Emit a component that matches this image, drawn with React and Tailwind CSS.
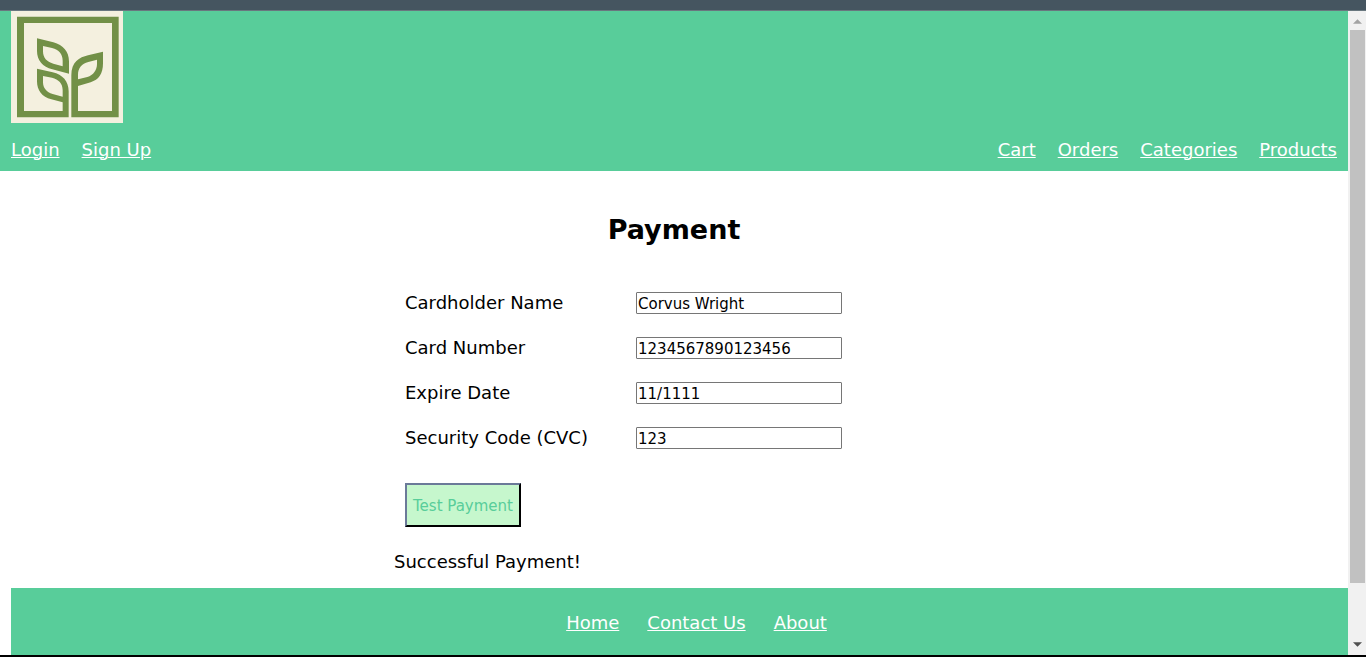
const navLink = "underline underline-offset-1 decoration-1";

const fields = [
  { id: "name", label: "Cardholder Name", value: "Corvus Wright" },
  { id: "number", label: "Card Number", value: "1234567890123456" },
  { id: "expire", label: "Expire Date", value: "11/1111" },
  { id: "cvc", label: "Security Code (CVC)", value: "123" },
];

function Logo() {
  return (
    <svg viewBox="33 33 336 336" className="block size-28" role="img" aria-label="Plant shop">
      <rect x="33" y="33" width="336" height="336" fill="#f4f0df" />
      <path
        fill="#729047"
        fillRule="evenodd"
        d="M51 50H356V352H214V226C214 186 238 172 264 166L309 155V190C309 222 296 239 272 247L234 258V333H336V69H72V333H188V307L154 298C126 291 111 271 111 244V206L158 217C188 224 206 244 206 274V352H51ZM234 238L262 231C280 226 291 210 291 192V179L265 186C245 191 234 205 234 224ZM188 290V270C188 250 176 238 156 233L129 228V246C129 264 140 277 158 282Z"
      />
      <path
        fill="#729047"
        fillRule="evenodd"
        d="M111 115L160 127C190 135 207 155 207 184V221L157 208C128 201 111 181 111 153ZM129 138V154C129 173 140 186 160 191L188 199V182C188 163 177 149 156 144Z"
      />
    </svg>
  );
}

function Scrollbar() {
  return (
    <div className="flex w-[18px] shrink-0 flex-col items-center bg-[#f1f1f1]" aria-hidden="true">
      <svg viewBox="0 0 10 5" className="mt-2 mb-[6px] h-[5px] w-[9px] shrink-0">
        <path d="M5 0L10 5H0Z" fill="#a3a3a3" />
      </svg>
      <div className="w-[15px] grow bg-[#c1c1c1]" />
      <div className="h-[59px] shrink-0" />
      <svg viewBox="0 0 10 5" className="mb-2 h-[5px] w-[9px] shrink-0">
        <path d="M0 0H10L5 5Z" fill="#505050" />
      </svg>
    </div>
  );
}

export default function App() {
  return (
    <div className="flex min-h-screen flex-col border-b-2 border-black bg-white font-['Verdana','DejaVu_Sans',sans-serif] text-lg leading-6 text-black">
      <div className="h-[11px] shrink-0 border-b border-[#69777f] bg-[#455560]" />
      <div className="flex grow">
        <div className="flex min-w-0 grow flex-col">
          <header className="bg-[#58cd9a] px-[11px] text-white">
            <Logo />
            <nav className="flex h-12 items-center justify-between pt-[6px]">
              <div className="flex gap-[22px]">
                <a href="#login" className={navLink}>Login</a>
                <a href="#signup" className={navLink}>Sign Up</a>
              </div>
              <div className="flex gap-[22px]">
                <a href="#cart" className={navLink}>Cart</a>
                <a href="#orders" className={navLink}>Orders</a>
                <a href="#categories" className={navLink}>Categories</a>
                <a href="#products" className={navLink}>Products</a>
              </div>
            </nav>
          </header>

          <main className="pt-[41px]">
            <h1 className="text-center text-[27px] leading-9 font-bold">Payment</h1>
            <div className="mx-auto w-[560px] max-w-full">
              <form className="px-[11px] pt-[43px]" onSubmit={(e) => e.preventDefault()}>
                <div className="flex flex-col gap-[21px]">
                  {fields.map((f) => (
                    <div key={f.id} className="flex items-center">
                      <label htmlFor={f.id} className="w-[231px]">{f.label}</label>
                      <input
                        id={f.id}
                        type="text"
                        defaultValue={f.value}
                        className="h-[22px] w-[206px] rounded-[1px] border border-[#767676] bg-white px-px pt-px text-[15px]"
                      />
                    </div>
                  ))}
                </div>
                <button
                  type="submit"
                  className="mt-[33px] block h-11 w-[116px] border-2 border-t-[#6b7a99] border-r-black border-b-black border-l-[#6b7a99] bg-[#c6f7cd] pt-0.5 text-[15px] whitespace-nowrap text-[#58cd9a]"
                >
                  Test Payment
                </button>
              </form>
              <p className="pt-[23px] pb-[14px]">Successful Payment!</p>
            </div>
          </main>

          <footer className="ml-[11px] grow bg-[#58cd9a] pt-[23px] text-white">
            <nav className="flex justify-center gap-7 pl-[34px]">
              <a href="#home" className={navLink}>Home</a>
              <a href="#contact" className={navLink}>Contact Us</a>
              <a href="#about" className={navLink}>About</a>
            </nav>
          </footer>
        </div>
        <Scrollbar />
      </div>
    </div>
  );
}
